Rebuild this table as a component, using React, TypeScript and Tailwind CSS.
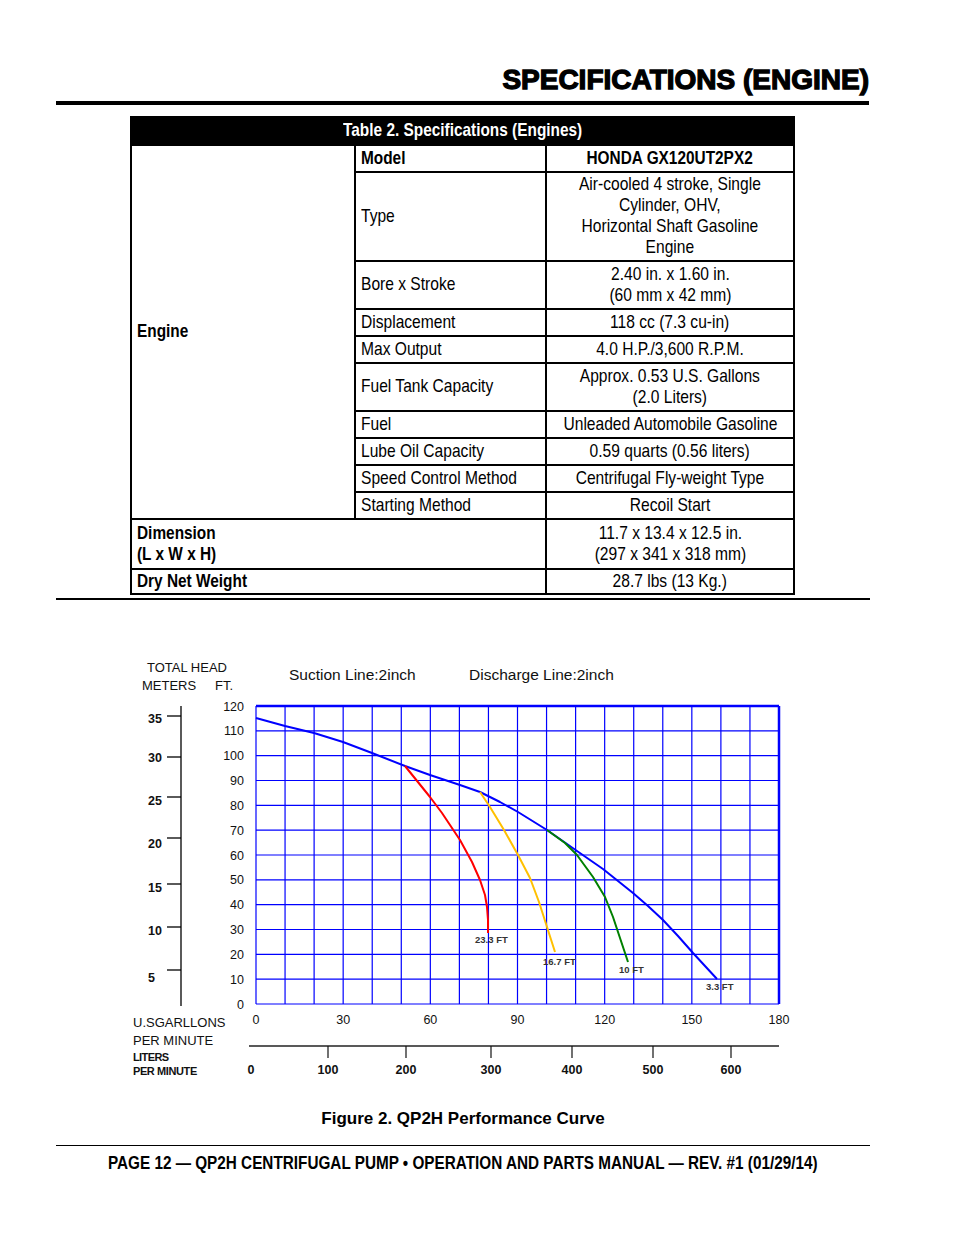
import React from "react";

function Cell({ className = "", children }: { className?: string; children?: React.ReactNode }) {
  return <div className={`border-l-2 border-t-2 border-black flex items-center pb-[3px] ${className}`}>{children}</div>;
}

function L({ children, bold = false }: { children: React.ReactNode; bold?: boolean }) {
  return (
    <span
      className={`inline-block whitespace-nowrap origin-left ${bold ? "font-bold scale-x-[0.81]" : "scale-x-[0.82]"}`}
    >
      {children}
    </span>
  );
}

function C({ children, bold = false }: { children: React.ReactNode; bold?: boolean }) {
  return (
    <span
      className={`inline-block whitespace-nowrap text-center origin-center ${bold ? "font-bold scale-x-[0.81]" : "scale-x-[0.82]"}`}
    >
      {children}
    </span>
  );
}

function SpecTable() {
  const rows: [string, React.ReactNode][] = [
    ["Type", <>Air-cooled 4 stroke, Single<br />Cylinder, OHV,<br />Horizontal Shaft Gasoline<br />Engine</>],
    ["Bore x Stroke", <>2.40 in. x 1.60 in.<br />(60 mm x 42 mm)</>],
    ["Displacement", "118 cc (7.3 cu-in)"],
    ["Max Output", "4.0 H.P./3,600 R.P.M."],
    ["Fuel Tank Capacity", <>Approx. 0.53 U.S. Gallons<br />(2.0 Liters)</>],
    ["Fuel", "Unleaded Automobile Gasoline"],
    ["Lube Oil Capacity", "0.59 quarts (0.56 liters)"],
    ["Speed Control Method", "Centrifugal Fly-weight Type"],
    ["Starting Method", "Recoil Start"],
  ];
  return (
    <div className="ml-[130px] mt-[11px] w-[665px] grid grid-cols-[224px_191px_248px] grid-rows-[28px_27px_89px_48px_27px_27px_48px_27px_27px_27px_27px_50px_25px] border-r-2 border-b-2 border-black text-[19px] leading-[21px] text-black">
      <Cell className="col-span-3 bg-black justify-center text-white">
        <C bold>Table 2. Specifications (Engines)</C>
      </Cell>
      <Cell className="row-span-10 pl-[5px]">
        <L bold>Engine</L>
      </Cell>
      <Cell className="pl-[5px]">
        <L bold>Model</L>
      </Cell>
      <Cell className="justify-center">
        <C bold>HONDA GX120UT2PX2</C>
      </Cell>
      {rows.map(([k, v]) => (
        <React.Fragment key={k}>
          <Cell className="pl-[5px]">
            <L>{k}</L>
          </Cell>
          <Cell className="justify-center">
            <C>{v}</C>
          </Cell>
        </React.Fragment>
      ))}
      <Cell className="col-span-2 pl-[5px]">
        <L bold>
          Dimension
          <br />
          (L x W x H)
        </L>
      </Cell>
      <Cell className="justify-center">
        <C>
          11.7 x 13.4 x 12.5 in.
          <br />
          (297 x 341 x 318 mm)
        </C>
      </Cell>
      <Cell className="col-span-2 pl-[5px]">
        <L bold>Dry Net Weight</L>
      </Cell>
      <Cell className="justify-center">
        <C>28.7 lbs (13 Kg.)</C>
      </Cell>
    </div>
  );
}

function Chart() {
  const x0 = 256, x1 = 779, y0 = 1004, y1 = 706;
  const gx = (g: number) => x0 + ((x1 - x0) * g) / 180;
  const gy = (f: number) => y0 - ((y0 - y1) * f) / 120;
  const vlines = Array.from({ length: 19 }, (_, i) => gx(i * 10));
  const hlines = Array.from({ length: 13 }, (_, i) => gy(i * 10));
  const ftLabels = Array.from({ length: 13 }, (_, i) => i * 10);
  const meters: [string, number, number][] = [
    ["35", 716, 723],
    ["30", 757, 762],
    ["25", 797, 805],
    ["20", 838, 848],
    ["15", 884, 892],
    ["10", 927, 935],
    ["5", 970, 982],
  ];
  const gal = [0, 30, 60, 90, 120, 150, 180];
  const liters: [string, number][] = [
    ["0", 251],
    ["100", 328],
    ["200", 406],
    ["300", 491],
    ["400", 572],
    ["500", 653],
    ["600", 731],
  ];
  const txt = "font-['Liberation_Sans',Arial,sans-serif]";
  return (
    <svg className="ml-[100px] mt-[50px] block" width={780} height={450} viewBox="100 650 780 450">
      <g className={txt} fill="#111">
        <text x={147} y={672} fontSize={13}>TOTAL HEAD</text>
        <text x={142} y={690} fontSize={13}>METERS</text>
        <text x={215} y={690} fontSize={13}>FT.</text>
        <text x={289} y={680} fontSize={15.5}>Suction Line:2inch</text>
        <text x={469} y={680} fontSize={15.5}>Discharge Line:2inch</text>
      </g>
      {/* meter axis */}
      <line x1={181} y1={706} x2={181} y2={1006} stroke="#000" strokeWidth={1.3} />
      {meters.map(([l, ty, by]) => (
        <g key={l}>
          <line x1={167} y1={ty} x2={181} y2={ty} stroke="#000" strokeWidth={1.3} />
          <text x={148} y={by} fontSize={12.5} fontWeight="bold" className={txt} fill="#111">
            {l}
          </text>
        </g>
      ))}
      {/* ft labels */}
      {ftLabels.map((f) => (
        <text key={f} x={244} y={gy(f) + 4.5} fontSize={12.5} textAnchor="end" className={txt} fill="#111">
          {f}
        </text>
      ))}
      {/* grid */}
      {vlines.map((x, i) => (
        <line key={"v" + i} x1={x} y1={y1} x2={x} y2={y0} stroke="#0000ff" strokeWidth={i === 18 ? 2.5 : 1.2} />
      ))}
      {hlines.map((y, i) => (
        <line key={"h" + i} x1={x0} y1={y} x2={x1} y2={y} stroke="#0000ff" strokeWidth={i === 12 ? 2.5 : 1.2} />
      ))}
      {/* curves */}
      <polyline
        fill="none"
        stroke="#0000ff"
        strokeWidth={2}
        strokeLinejoin="round"
        points="256,718 285,726 314,733 343,742 372,753 405,766 430,775 460,785 480,792 500,802 518,812 547,830 577,851 603,869 633,893 648,906 663,920 678,936 693,953 705,966 717,979"
      />
      <polyline
        fill="none"
        stroke="#ff0000"
        strokeWidth={2}
        strokeLinejoin="round"
        points="405,766 430,797 442,813 460,840 472,862 480,880 485,895 487,907 488,920 488,933"
      />
      <polyline
        fill="none"
        stroke="#ffc000"
        strokeWidth={2}
        strokeLinejoin="round"
        points="480,792 490,807 504,830 518,855 530,878 539,902 547,927 555,952"
      />
      <polyline
        fill="none"
        stroke="#008000"
        strokeWidth={2}
        strokeLinejoin="round"
        points="547,830 565,843 577,855 593,877 605,897 613,917 620,938 628,962"
      />
      <g className={txt} fill="#333" fontSize={9.5} fontWeight="bold">
        <text x={475} y={943}>23.3 FT</text>
        <text x={543} y={965}>16.7 FT</text>
        <text x={619} y={973}>10 FT</text>
        <text x={706} y={990}>3.3 FT</text>
      </g>
      {/* gallons axis */}
      <g className={txt} fill="#111" fontSize={12.5}>
        {gal.map((g) => (
          <text key={g} x={gx(g)} y={1024} textAnchor="middle">
            {g}
          </text>
        ))}
        <text x={133} y={1027} fontSize={13}>U.SGARLLONS</text>
        <text x={133} y={1045} fontSize={13}>PER MINUTE</text>
      </g>
      {/* liters axis */}
      <line x1={249} y1={1046} x2={779} y2={1046} stroke="#222" strokeWidth={1.4} />
      {liters.slice(1).map(([l, x]) => (
        <line key={l} x1={x} y1={1046} x2={x} y2={1058} stroke="#111" strokeWidth={1.2} />
      ))}
      <g className={txt} fill="#111" fontSize={12.5} fontWeight="bold">
        {liters.map(([l, x]) => (
          <text key={l} x={x} y={1074} textAnchor="middle">
            {l}
          </text>
        ))}
        <text x={133} y={1061} fontSize={11} letterSpacing={-0.6}>LITERS</text>
        <text x={133} y={1075} fontSize={11} letterSpacing={-0.4}>PER MINUTE</text>
      </g>
    </svg>
  );
}

export default function App() {
  return (
    <div className="w-[954px] h-[1235px] bg-white text-black font-['Liberation_Sans',Arial,sans-serif] overflow-hidden">
      <div className="pt-[64px] pr-[85px] text-right">
        <h1 className="text-[28px] leading-[32px] font-bold [-webkit-text-stroke:1.3px_black]">
          SPECIFICATIONS (ENGINE)
        </h1>
      </div>
      <div className="ml-[56px] mt-[5px] w-[813px] h-[4px] bg-black" />
      <SpecTable />
      <div className="ml-[56px] mt-[3px] w-[814px] h-[2px] bg-black" />
      <Chart />
      <div className="ml-[56px] w-[814px] mt-[9px] text-center text-[17px] leading-[20px] font-bold">
        Figure 2. QP2H Performance Curve
      </div>
      <div className="ml-[56px] w-[814px] mt-[16px] h-[1px] bg-black" />
      <div className="ml-[56px] w-[814px] mt-[5px] flex justify-center text-[19px] leading-[24px]">
        <span className="inline-block whitespace-nowrap font-bold scale-x-[0.805]">
          PAGE 12 — QP2H CENTRIFUGAL PUMP • OPERATION AND PARTS MANUAL — REV. #1 (01/29/14)
        </span>
      </div>
    </div>
  );
}
